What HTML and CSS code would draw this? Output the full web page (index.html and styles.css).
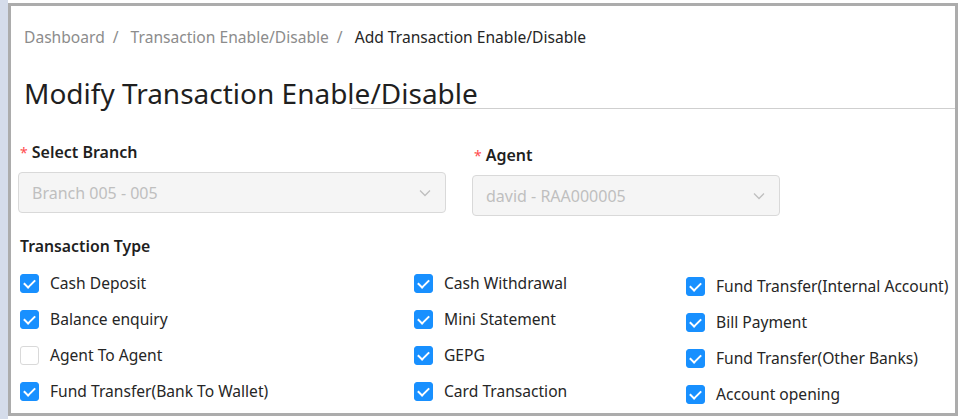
FILE: index.html
```html
<!DOCTYPE html>
<html>
<head>
<meta charset="utf-8">
<link rel="stylesheet" href="styles.css">
</head>
<body>
<div class="page">
  <div class="strip"></div>
  <div class="main">
    <div class="card">
      <nav class="crumbs">
        <span class="crumb">Dashboard</span><span class="sep">/</span>
        <span class="crumb">Transaction Enable/Disable</span><span class="sep">/</span>
        <span class="crumb current">Add Transaction Enable/Disable</span>
      </nav>
      <h1 class="title">Modify Transaction Enable/Disable</h1>
      <div class="rule"></div>
      <div class="fields">
        <div class="field branch">
          <label class="flabel"><span class="req">*</span>Select Branch</label>
          <div class="select"><span class="value">Branch 005 - 005</span>
            <svg class="chev" width="12" height="8" viewBox="0 0 12 8"><path d="M1 1.5 L6 6.5 L11 1.5" fill="none" stroke="#bfbfbf" stroke-width="1.3"/></svg>
          </div>
        </div>
        <div class="field agent">
          <label class="flabel"><span class="req">*</span>Agent</label>
          <div class="select"><span class="value">david - RAA000005</span>
            <svg class="chev" width="12" height="8" viewBox="0 0 12 8"><path d="M1 1.5 L6 6.5 L11 1.5" fill="none" stroke="#bfbfbf" stroke-width="1.3"/></svg>
          </div>
        </div>
      </div>
      <div class="ttype">Transaction Type</div>
      <div class="checks">
        <div class="col">
          <div class="chk"><span class="box on"></span>Cash Deposit</div>
          <div class="chk"><span class="box on"></span>Balance enquiry</div>
          <div class="chk"><span class="box"></span>Agent To Agent</div>
          <div class="chk"><span class="box on"></span>Fund Transfer(Bank To Wallet)</div>
        </div>
        <div class="col">
          <div class="chk"><span class="box on"></span>Cash Withdrawal</div>
          <div class="chk"><span class="box on"></span>Mini Statement</div>
          <div class="chk"><span class="box on"></span>GEPG</div>
          <div class="chk"><span class="box on"></span>Card Transaction</div>
        </div>
        <div class="col col3">
          <div class="chk"><span class="box on"></span>Fund Transfer(Internal Account)</div>
          <div class="chk"><span class="box on"></span>Bill Payment</div>
          <div class="chk"><span class="box on"></span>Fund Transfer(Other Banks)</div>
          <div class="chk"><span class="box on"></span>Account opening</div>
        </div>
      </div>
    </div>
  </div>
</div>
</body>
</html>
```
FILE: styles.css
```css
* { box-sizing: border-box; }
html, body { margin: 0; padding: 0; }
body {
  font-family: "Segoe UI", "Noto Sans", "Open Sans", sans-serif;
  color: #262626;
  background: #fff;
  width: 963px;
  height: 419px;
  overflow: hidden;
}
.page { display: flex; height: 419px; }
.strip { width: 8px; background: #d5dcea; flex: none; }
.main { flex: 1; padding: 3px 5px 3px 0; }
.card {
  border: 3px solid #acacac;
  height: 413px;
  background: #fff;
  position: relative;
}
.crumbs {
  padding: 20px 0 0 13px;
  font-size: 15.6px;
  line-height: 22px;
  color: #8c8c8c;
}
.crumb.current { color: #262626; }
.sep { margin: 0 8px; color: #8c8c8c; }
.title {
  margin: 0;
  padding: 30px 0 0 13px;
  font-size: 28px;
  font-weight: 400;
  line-height: 30px;
  color: #1f1f1f;
}
.rule {
  margin: 0 0 0 340px;
  height: 1px;
  background: #cfcfcf;
}
.fields { display: flex; padding: 0 0 0 7px; }
.field.branch { width: 428px; margin-top: 32px; }
.field.agent { width: 308px; margin-left: 26px; margin-top: 35px; }
.flabel {
  display: block;
  font-size: 16px;
  font-weight: 600;
  line-height: 22px;
  color: #1f1f1f;
}
.req { color: #ff4d4f; font-weight: 400; margin: 0 4px 0 2px; font-size: 14px; }
.select {
  margin-top: 8px;
  height: 41px;
  border: 1px solid #d9d9d9;
  border-radius: 4px;
  background: #f5f5f5;
  display: flex;
  align-items: center;
  justify-content: space-between;
  padding: 0 14px 0 13px;
  color: #bfbfbf;
  font-size: 16px;
}
.ttype {
  padding: 19px 0 0 9px;
  font-size: 15.8px;
  font-weight: 600;
  line-height: 22px;
  color: #1f1f1f;
}
.checks {
  display: grid;
  grid-template-columns: 394px 272px 1fr;
  padding: 15px 0 0 9px;
}
.col { display: flex; flex-direction: column; gap: 14px; }
.col3 { margin-top: 3px; }
.chk {
  display: flex;
  align-items: center;
  height: 22px;
  font-size: 15.6px;
  color: #262626;
}
.box {
  width: 19px;
  height: 19px;
  border: 1px solid #d9d9d9;
  border-radius: 3px;
  background: #fff;
  margin-right: 11px;
  flex: none;
  position: relative;
}
.box.on { background: #1890ff; border-color: #1890ff; }
.box.on::after {
  content: "";
  position: absolute;
  left: 5px;
  top: 2px;
  width: 5px;
  height: 9px;
  border: solid #fff;
  border-width: 0 2px 2px 0;
  transform: rotate(45deg);
}
```
